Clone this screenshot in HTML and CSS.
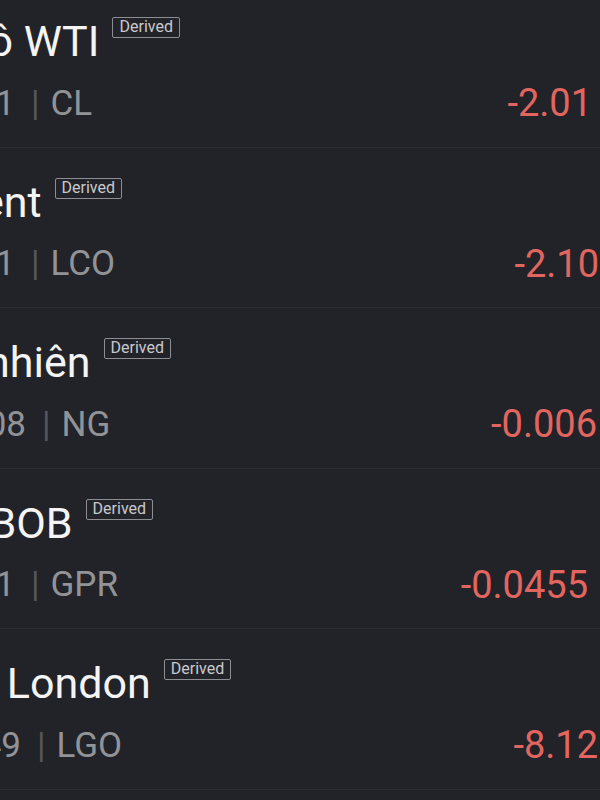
FILE: index.html
```html
<!DOCTYPE html>
<html lang="vi">
<head>
    <meta charset="UTF-8">
    <meta name="viewport" content="width=device-width, initial-scale=1.0">
    <title>Hàng hóa</title>
    <link rel="stylesheet" href="styles.css">
</head>
<body>
    <div class="list">
        <!-- WTI -->
        <div class="row">
            <div class="row-top">
                <span class="name">Dầu Thô WTI</span>
                <span class="badge">Derived</span>
            </div>
            <div class="row-bottom">
                <span class="meta">21:29:51<span class="pipe">|</span>CL</span>
                <span class="chg chg-wti">-2.01</span>
            </div>
        </div>

        <!-- Brent -->
        <div class="row">
            <div class="row-top">
                <span class="name">Dầu Brent</span>
                <span class="badge">Derived</span>
            </div>
            <div class="row-bottom">
                <span class="meta">21:29:51<span class="pipe">|</span>LCO</span>
                <span class="chg chg-brent">-2.10</span>
            </div>
        </div>

        <!-- Natural gas -->
        <div class="row">
            <div class="row-top">
                <span class="name">Khí Tự nhiên</span>
                <span class="badge">Derived</span>
            </div>
            <div class="row-bottom">
                <span class="meta meta-ng">21:29:08<span class="pipe">|</span>NG</span>
                <span class="chg chg-ng">-0.006</span>
            </div>
        </div>

        <!-- RBOB -->
        <div class="row">
            <div class="row-top">
                <span class="name">Xăng RBOB</span>
                <span class="badge">Derived</span>
            </div>
            <div class="row-bottom">
                <span class="meta">21:29:51<span class="pipe">|</span>GPR</span>
                <span class="chg chg-rbob">-0.0455</span>
            </div>
        </div>

        <!-- London gasoil -->
        <div class="row">
            <div class="row-top">
                <span class="name">Dầu khí London</span>
                <span class="badge">Derived</span>
            </div>
            <div class="row-bottom">
                <span class="meta meta-lgo">21:29:49<span class="pipe">|</span>LGO</span>
                <span class="chg chg-lgo">-8.12</span>
            </div>
        </div>
    </div>
</body>
</html>
```

FILE: styles.css
```css
* {
    margin: 0;
    padding: 0;
    box-sizing: border-box;
}

body {
    font-family: Roboto, "Liberation Sans", sans-serif;
    background: #222328;
    color: #f4f4f5;
    overflow: hidden;
    height: 800px;
}

/* list is scrolled a little, first row starts above the top edge */
.list {
    margin-top: -13px;
    display: flex;
    flex-direction: column;
}

.row {
    height: 160.5px;
    margin-left: -146px;
    padding-top: 28px;
    border-bottom: 1px solid #2c2d32;
    display: flex;
    flex-direction: column;
}

.row-top {
    display: flex;
    align-items: flex-start;
    gap: 13px;
}

.name {
    font-size: 43px;
    line-height: 52px;
    white-space: nowrap;
}

.badge {
    margin-top: 2px;
    height: 21px;
    padding: 0 6px;
    font-size: 16px;
    line-height: 18px;
    color: #c9c9cd;
    border: 1.5px solid #8d8e92;
    border-radius: 2px;
    white-space: nowrap;
}

.row-bottom {
    margin-top: 12px;
    height: 48px;
    display: flex;
    justify-content: space-between;
    align-items: center;
}

.meta {
    margin-left: 26px;
    font-size: 35px;
    color: #929397;
    white-space: nowrap;
}

.meta-ng { margin-left: 37px; }
.meta-lgo { margin-left: 32px; }

.pipe {
    color: #56575c;
    margin: 0 11px 0 16px;
}

.chg {
    font-size: 38px;
    color: #e2665f;
    white-space: nowrap;
}

.chg-wti { margin-right: 8px; }
.chg-brent { margin-right: 1px; }
.chg-ng { margin-right: 3px; }
.chg-rbob { margin-right: 12px; }
.chg-lgo { margin-right: 2px; }
```
